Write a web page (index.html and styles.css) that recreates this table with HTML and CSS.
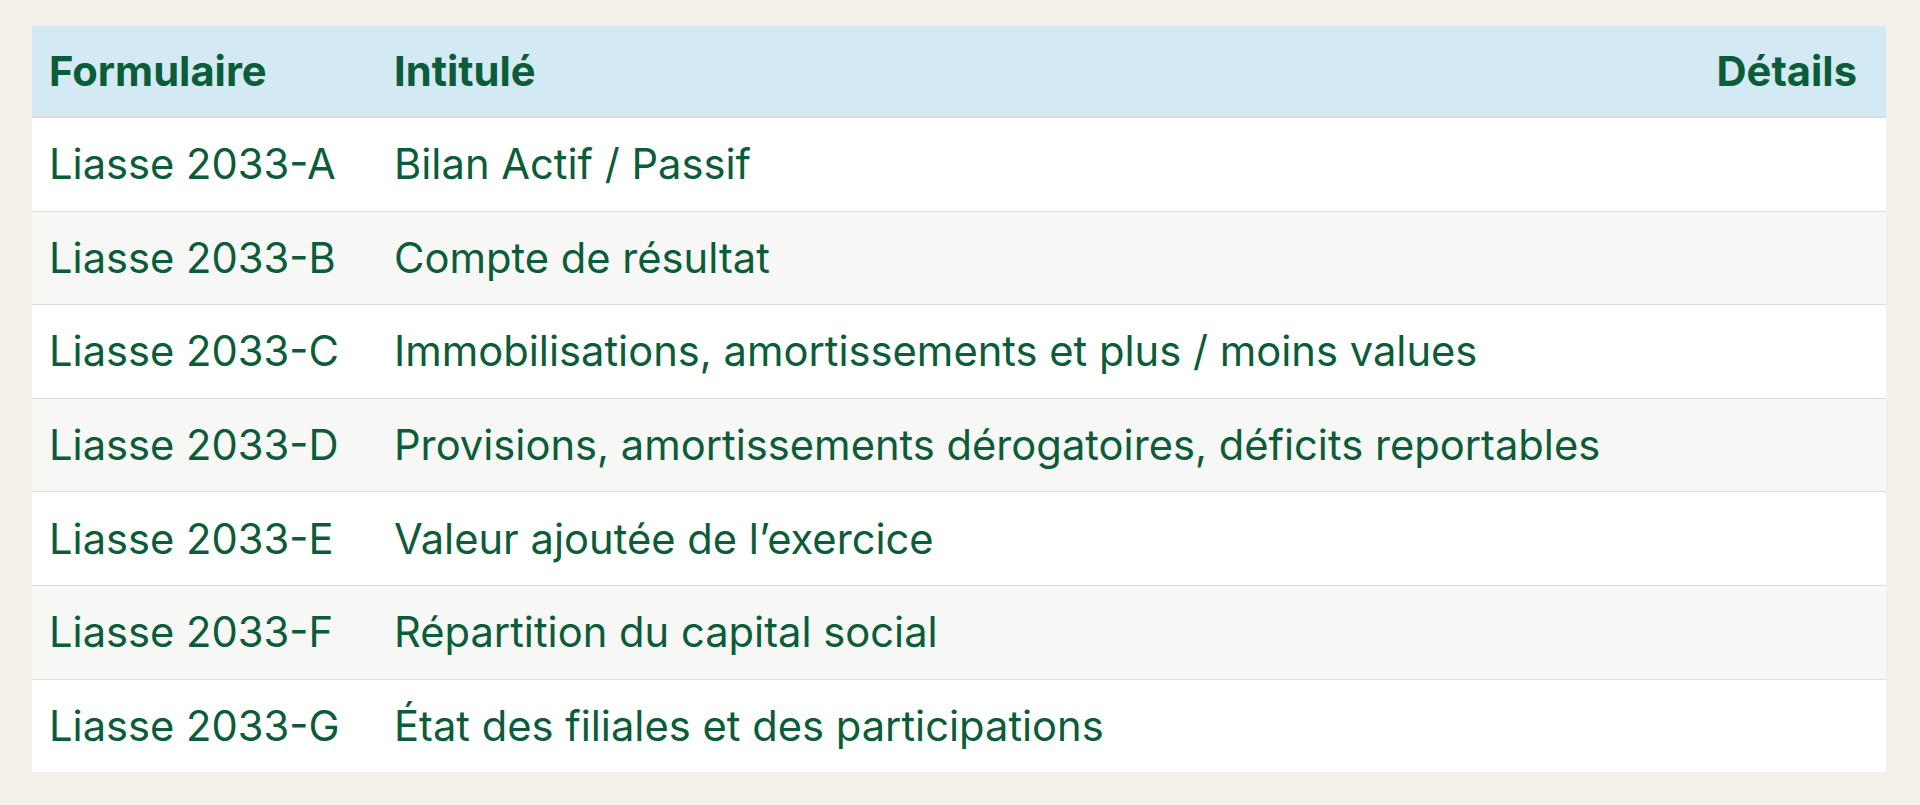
FILE: index.html
```html
<!DOCTYPE html>
<html lang="fr">
<head>
<meta charset="utf-8">
<link rel="stylesheet" href="styles.css">
</head>
<body>
<div class="page">
  <table class="forms">
    <thead>
      <tr><th class="c-form">Formulaire</th><th class="c-title">Intitulé</th><th class="c-det">Détails</th></tr>
    </thead>
    <tbody>
      <tr><td>Liasse 2033-A</td><td>Bilan Actif / Passif</td><td></td></tr>
      <tr><td>Liasse 2033-B</td><td>Compte de résultat</td><td></td></tr>
      <tr><td>Liasse 2033-C</td><td>Immobilisations, amortissements et plus / moins values</td><td></td></tr>
      <tr><td>Liasse 2033-D</td><td>Provisions, amortissements dérogatoires, déficits reportables</td><td></td></tr>
      <tr><td>Liasse 2033-E</td><td>Valeur ajoutée de l’exercice</td><td></td></tr>
      <tr><td>Liasse 2033-F</td><td>Répartition du capital social</td><td></td></tr>
      <tr><td>Liasse 2033-G</td><td>État des filiales et des participations</td><td></td></tr>
    </tbody>
  </table>
</div>
</body>
</html>
```
FILE: styles.css
```css
html, body { margin: 0; padding: 0; background: #f4f0ea; }
body { font-family: Inter, "Noto Sans", sans-serif; color: #0b5c38; }
.page { padding: 26px 34px 0 32px; }
.forms { width: 100%; border-collapse: collapse; background: #fff; font-size: 41.7px; }
.forms th { background: #d3e9f4; font-weight: 700; text-align: left; line-height: 54px; padding: 18px 16px 18px 17px; border-bottom: 2px solid #d9dcdc; }
.forms th.c-form { width: 312px; }
.forms th.c-det { text-align: right; padding-right: 29px; }
.forms td { font-weight: 400; line-height: 54px; padding: 19.3px 16px 19.3px 17px; border-bottom: 1px solid #dcdcdc; white-space: nowrap; }
.forms tbody tr:nth-child(even) td { background: #f7f7f6; }
.forms tbody tr:last-child td { border-bottom: none; }
```
